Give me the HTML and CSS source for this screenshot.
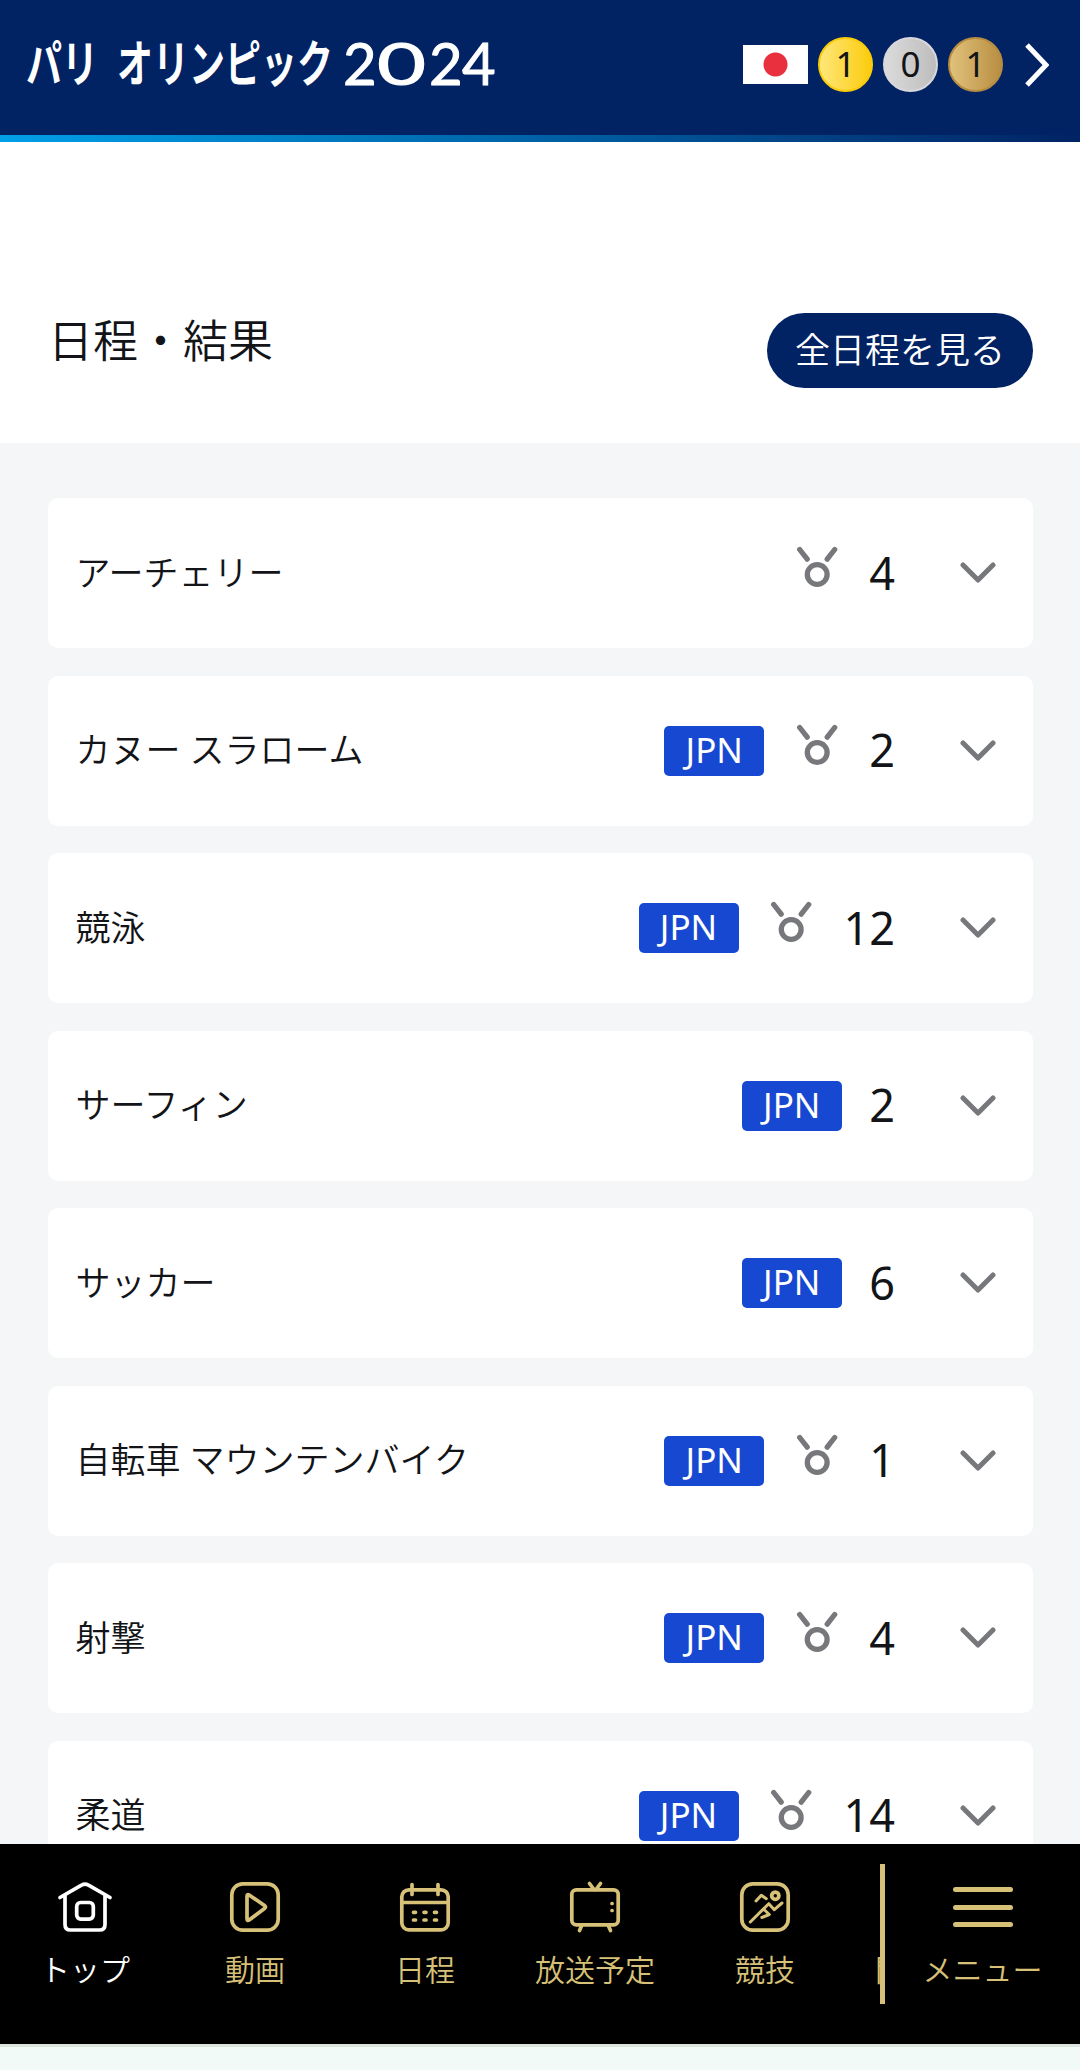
FILE: index.html
```html
<!DOCTYPE html>
<html lang="ja">
<head>
<meta charset="UTF-8">
<meta name="viewport" content="width=device-width, initial-scale=1.0">
<title>パリ オリンピック2024</title>
<link rel="stylesheet" href="styles.css">
</head>
<body>
<!-- shared icons -->
<svg class="defs" aria-hidden="true">
    <symbol id="medal" viewBox="0 0 50 50">
        <path d="M7.700 7.500l7.500 9.700M42.700 7.500l-7.500 9.700"/>
        <circle cx="25.200" cy="32.500" r="9.900"/>
    </symbol>
    <symbol id="chevron" viewBox="0 0 36 22">
        <path d="M3 3l15 15 15-15"/>
    </symbol>
</svg>
<header class="header">
    <h1 class="logo">
        <svg width="480" height="70" viewBox="0 0 480 70">
            <text x="-1" y="52" textLength="72" lengthAdjust="spacingAndGlyphs">パリ</text>
            <text x="90" y="52" textLength="216" lengthAdjust="spacingAndGlyphs">オリンピック</text>
            <text class="year" x="316" y="55">2</text>
            <text class="year" x="350" y="55" textLength="49" lengthAdjust="spacingAndGlyphs">0</text>
            <text class="year" x="402" y="55">2</text>
            <text class="year" x="435" y="55">4</text>
        </svg>
    </h1>
    <div class="medals">
        <span class="flag"></span>
        <span class="medal gold">1</span>
        <span class="medal silver">0</span>
        <span class="medal bronze">1</span>
        <svg class="next" width="24" height="44" viewBox="0 0 24 44"><path d="M2 2l19 20L2 42"/></svg>
    </div>
</header>
<main>
    <div class="heading">
        <h2>日程・結果</h2>
        <a class="all" href="#">全日程を見る</a>
    </div>
    <ul class="sports">
        <li class="sport">
            <span class="name">アーチェリー</span>
            <svg class="icon-medal"><use href="#medal"/></svg>
            <span class="count">4</span>
            <svg class="icon-chevron"><use href="#chevron"/></svg>
        </li>
        <li class="sport">
            <span class="name">カヌー スラローム</span>
            <span class="jpn">JPN</span>
            <svg class="icon-medal"><use href="#medal"/></svg>
            <span class="count">2</span>
            <svg class="icon-chevron"><use href="#chevron"/></svg>
        </li>
        <li class="sport">
            <span class="name">競泳</span>
            <span class="jpn">JPN</span>
            <svg class="icon-medal"><use href="#medal"/></svg>
            <span class="count">12</span>
            <svg class="icon-chevron"><use href="#chevron"/></svg>
        </li>
        <li class="sport">
            <span class="name">サーフィン</span>
            <span class="jpn">JPN</span>
            <span class="count">2</span>
            <svg class="icon-chevron"><use href="#chevron"/></svg>
        </li>
        <li class="sport">
            <span class="name">サッカー</span>
            <span class="jpn">JPN</span>
            <span class="count">6</span>
            <svg class="icon-chevron"><use href="#chevron"/></svg>
        </li>
        <li class="sport">
            <span class="name">自転車 マウンテンバイク</span>
            <span class="jpn">JPN</span>
            <svg class="icon-medal"><use href="#medal"/></svg>
            <span class="count">1</span>
            <svg class="icon-chevron"><use href="#chevron"/></svg>
        </li>
        <li class="sport">
            <span class="name">射撃</span>
            <span class="jpn">JPN</span>
            <svg class="icon-medal"><use href="#medal"/></svg>
            <span class="count">4</span>
            <svg class="icon-chevron"><use href="#chevron"/></svg>
        </li>
        <li class="sport">
            <span class="name">柔道</span>
            <span class="jpn">JPN</span>
            <svg class="icon-medal"><use href="#medal"/></svg>
            <span class="count">14</span>
            <svg class="icon-chevron"><use href="#chevron"/></svg>
        </li>
    </ul>
</main>
<nav class="nav">
    <div class="tabs">
        <a class="tab active" href="#">
            <svg class="tab-icon" viewBox="0 0 54 50">
                <path d="M2 15.500L23.500 3.200q3.500-2.200 7 0L52 15.500M7 14v28.500q0 5.500 5.500 5.500h29q5.500 0 5.500-5.500V14"/>
                <rect x="18.700" y="20.500" width="16.600" height="16.600" rx="4"/>
            </svg>
            トップ
        </a>
        <a class="tab" href="#">
            <svg class="tab-icon" viewBox="0 0 54 50">
                <rect x="3.800" y="1.800" width="46.400" height="46.400" rx="11"/>
                <path d="M19 14.500v22q0 3 2.500 1.300l15-11.300q2-1.500 0-3l-15-10.300q-2.500-1.700-2.500 1.300z"/>
            </svg>
            動画
        </a>
        <a class="tab" href="#">
            <svg class="tab-icon" viewBox="0 0 54 50">
                <rect x="3.800" y="7.800" width="46.400" height="40" rx="7"/>
                <path d="M4 20.500h46M14 2.500v10M40 2.500v10M15.500 30.300h2M26 30.300h2M36.500 30.300h2M15.500 38h2M26 38h2M36.500 38h2"/>
            </svg>
            日程
        </a>
        <a class="tab" href="#">
            <svg class="tab-icon" viewBox="0 0 54 50">
                <rect x="3.800" y="7.800" width="46.400" height="35" rx="4.500"/>
                <path d="M21.500 1.500l4.500 6M32.500 1.500L28 7.500M13.500 44l-2 4.500M40.500 44l2 4.500"/>
                <path d="M44 21.500h.1M44 28.500h.1"/>
            </svg>
            放送予定
        </a>
        <a class="tab" href="#">
            <svg class="tab-icon" viewBox="0 0 54 50">
                <rect x="3.800" y="1.800" width="46.400" height="46.400" rx="11"/>
                <circle cx="37.300" cy="13.700" r="3.600"/>
                <path class="thin" d="M18 19l5.300-5.800 5 3.500M12.300 40l18.500-18.300 5.500 6L44 21M26 27.500l5.300 5-7.500 3"/>
            </svg>
            競技
        </a>
        <a class="tab" href="#">関連情報</a>
    </div>
    <a class="menu" href="#">
        <span class="bars"><i></i><i></i><i></i></span>
        メニュー
    </a>
</nav>
</body>
</html>
```
FILE: styles.css
```css
* {
    box-sizing: border-box;
}
body {
    margin: 0;
    height: 2070px;
    display: flex;
    flex-direction: column;
    overflow: hidden;
    background: #f2faf7;
    color: #121417;
    font-family: "Noto Sans", "Noto Sans CJK JP", sans-serif;
    font-size: 35px;
}
a {
    color: inherit;
    text-decoration: none;
}
.defs {
    position: absolute;
    width: 0;
    height: 0;
}

/* header */
.header {
    flex: none;
    height: 142px;
    display: flex;
    justify-content: space-between;
    padding: 0 31px 0 27px;
    background: linear-gradient(90deg, #009fe8, #012364) bottom / 100% 7px no-repeat #012364;
}
.logo {
    margin: 30px 0 0;
    line-height: 0;
}
.logo svg {
    overflow: visible;
}
.logo text {
    fill: #fff;
    font-family: "Noto Sans CJK JP", sans-serif;
    font-size: 50px;
    font-weight: 700;
}
.logo .year {
    font-family: Lato, sans-serif;
    font-size: 58px;
    font-weight: 400;
    stroke: #fff;
    stroke-width: 1;
}
.medals {
    height: 129px;
    display: flex;
    align-items: center;
    gap: 10px;
}
.flag {
    width: 65px;
    height: 39px;
    background: radial-gradient(circle, #e8303f 11.5px, #fff 12.5px);
}
.medal {
    width: 55px;
    height: 55px;
    border: 2px solid;
    border-radius: 50%;
    line-height: 50px;
    text-align: center;
    background-origin: border-box;
}
.gold {
    background-image: linear-gradient(90deg, #ffe77e, #fbcb09);
    border-color: #fbcb09;
}
.silver {
    background-image: linear-gradient(90deg, #dcdcdc, #bcbcbc);
    border-color: #d8d8dc;
}
.bronze {
    background-image: linear-gradient(90deg, #e2c47d, #b78c40);
    border-color: #b78c40;
}
.next {
    margin-left: 12px;
    fill: none;
    stroke: #fff;
    stroke-width: 5;
}

/* heading */
main {
    flex: none;
    height: 1702px;
    overflow: hidden;
    background: #f4f6f8;
}
.heading {
    height: 301px;
    display: flex;
    justify-content: space-between;
    align-items: flex-start;
    padding: 171px 47px 0 48px;
    background: #fff;
}
h2 {
    margin: 0;
    font-size: 45px;
    font-weight: 350;
    line-height: 56px;
}
.all {
    width: 266px;
    height: 75px;
    border-radius: 38px;
    background: #012364;
    color: #fff;
    font-weight: 350;
    line-height: 73px;
    text-align: center;
}

/* sports list */
.sports {
    margin: 0;
    padding: 55px 47px 0 48px;
    display: flex;
    flex-direction: column;
    gap: 27.5px;
    list-style: none;
}
.sport {
    height: 150px;
    display: flex;
    align-items: center;
    gap: 27.5px;
    padding: 0 37.5px 0 27.5px;
    border-radius: 10px;
    background: #fff;
}
.name {
    flex: 1;
    margin-bottom: 6px;
    font-weight: 350;
}
.jpn {
    width: 100px;
    height: 50px;
    border-radius: 5px;
    background: #1748d1;
    color: #fff;
    line-height: 47px;
    text-align: center;
}
.icon-medal {
    width: 50px;
    height: 50px;
    margin-bottom: 12px;
    fill: none;
    stroke: #77787b;
    stroke-width: 5.3;
    stroke-linecap: round;
}
.count {
    margin-bottom: 2px;
    font-size: 45px;
}
.icon-chevron {
    width: 36px;
    height: 22px;
    margin-left: 37px;
    fill: none;
    stroke: #77787b;
    stroke-width: 5;
    stroke-linecap: round;
    stroke-linejoin: round;
}

/* bottom navigation */
.nav {
    flex: none;
    height: 203px;
    display: flex;
    border-bottom: 3px solid #dbe5de;
    background: #000;
    color: #d7c077;
    font-size: 30px;
    font-weight: 350;
    line-height: 40px;
}
.tabs {
    width: 880px;
    display: flex;
    overflow: hidden;
}
.tab {
    flex: none;
    width: 170px;
    height: 146px;
    display: flex;
    flex-direction: column;
    align-items: center;
    justify-content: flex-end;
}
.active {
    color: #fff;
}
.tab-icon {
    width: 54px;
    height: 50px;
    margin-bottom: 18px;
    overflow: visible;
    fill: none;
    stroke: currentColor;
    stroke-width: 3.7;
    stroke-linecap: round;
    stroke-linejoin: round;
}
.thin {
    stroke-width: 3;
}
.menu {
    width: 200px;
    height: 140px;
    margin-top: 20px;
    display: flex;
    flex-direction: column;
    align-items: center;
    padding-top: 23px;
    border-left: 5px solid #d7c077;
}
.bars {
    width: 60px;
    height: 40px;
    margin-bottom: 23px;
    display: flex;
    flex-direction: column;
    justify-content: space-between;
}
.bars i {
    height: 5px;
    border-radius: 3px;
    background: #d7c077;
}
```
